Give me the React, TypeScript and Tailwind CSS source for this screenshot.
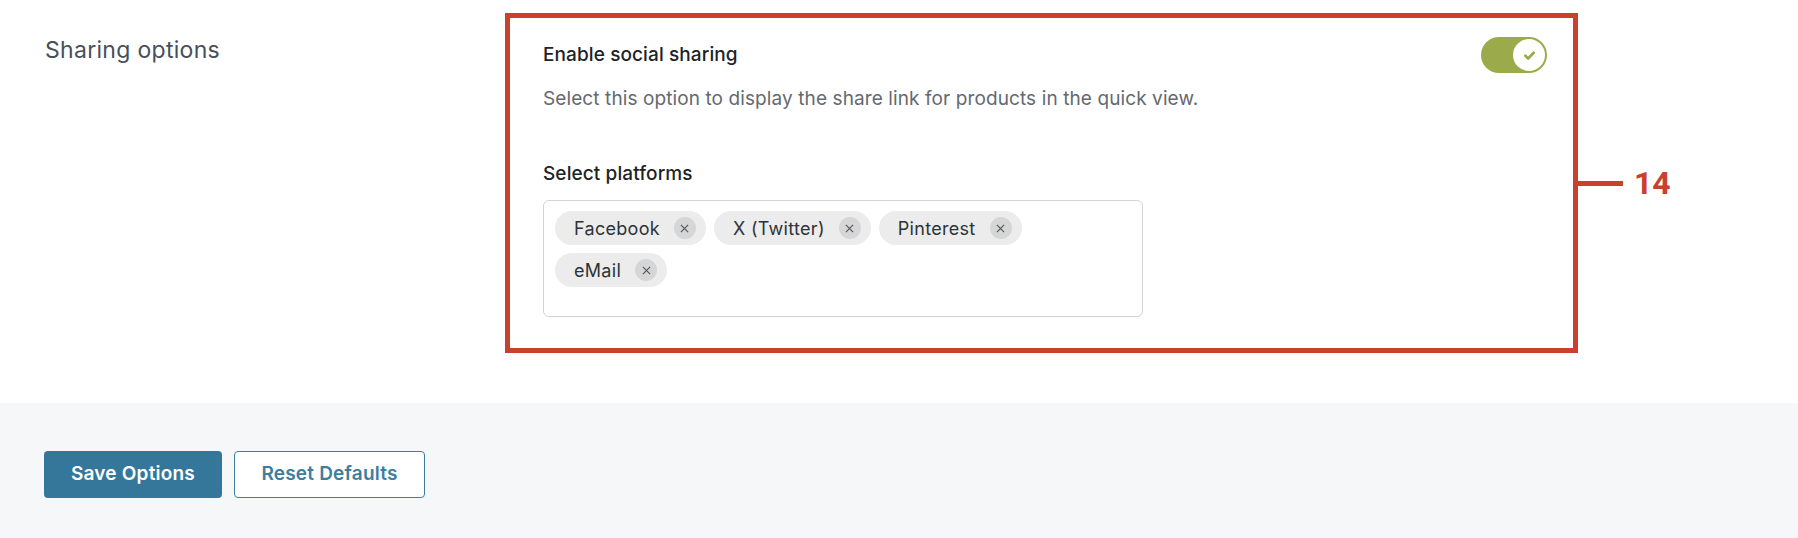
import { useState } from "react";

const PLATFORMS = ["Facebook", "X (Twitter)", "Pinterest", "eMail"];

const Chip = ({ label, onRemove }: { label: string; onRemove: () => void }) => (
  <span className="inline-flex h-[34px] items-center rounded-full bg-[#ececec] pl-[19px] pr-[10px] text-[18px] tracking-[0.3px] text-[#2c3338]">
    {label}
    <button
      onClick={onRemove}
      className="ml-[14px] flex h-[22px] w-[22px] items-center justify-center rounded-full bg-[#d6d6d6] text-[#50575e]"
    >
      <svg width="9" height="9" viewBox="0 0 10 10" fill="none" stroke="currentColor" strokeWidth="1.3">
        <path d="M1 1l8 8M9 1l-8 8" />
      </svg>
    </button>
  </span>
);

const Toggle = ({ on, onChange }: { on: boolean; onChange: (v: boolean) => void }) => (
  <button
    onClick={() => onChange(!on)}
    className={`flex h-[36px] w-[66px] items-center rounded-full p-[2px] ${
      on ? "justify-end bg-[#9bab4b]" : "justify-start bg-[#c3c4c7]"
    }`}
  >
    <span className="flex h-[32px] w-[32px] items-center justify-center rounded-full bg-white">
      {on && (
        <svg width="15" height="15" viewBox="0 0 12 12" fill="none" stroke="#9bab4b" strokeWidth="2.2" strokeLinecap="round" strokeLinejoin="round">
          <path d="M2.7 6.2l2.2 2.2 4.4-4.6" />
        </svg>
      )}
    </span>
  </button>
);

export default function App() {
  const [enabled, setEnabled] = useState(true);
  const [selected, setSelected] = useState(PLATFORMS);

  return (
    <div className="min-h-screen bg-white font-['Inter',sans-serif]">
      <div className="flex pt-[13px] pb-[50px] pl-[45px]">
        <div className="w-[460px] shrink-0 pt-[22px] text-[23px] leading-[30px] tracking-[0.3px] text-[#474f5c]">
          Sharing options
        </div>

        <div className="w-[1073px] shrink-0 border-[5px] border-[#c9412c] pt-[19px] pr-[26px] pb-[31px] pl-[33px]">
          <div className="flex h-[36px] items-center justify-between">
            <span className="text-[19px] font-medium tracking-[0.1px] text-[#1d2327]">Enable social sharing</span>
            <Toggle on={enabled} onChange={setEnabled} />
          </div>
          <p className="mt-[12px] text-[19px] leading-[28px] tracking-[0.1px] text-[#646970]">
            Select this option to display the share link for products in the quick view.
          </p>

          <div className="mt-[47px] text-[19px] font-medium leading-[28px] tracking-[0.1px] text-[#1d2327]">
            Select platforms
          </div>
          <div className="mt-[12px] flex h-[117px] w-[600px] flex-wrap content-start gap-x-[8px] gap-y-[8px] rounded-[6px] border border-[#d0d4d8] px-[11px] pt-[10px]">
            {selected.map((p) => (
              <Chip key={p} label={p} onRemove={() => setSelected(selected.filter((s) => s !== p))} />
            ))}
          </div>
        </div>

        <div className="flex items-center">
          <div className="h-[5px] w-[45px] bg-[#c9412c]" />
          <span className="ml-[11px] font-['Roboto',sans-serif] text-[32px] font-bold text-[#c9412c]">14</span>
        </div>
      </div>

      <div className="flex gap-[12px] bg-[#f6f7f9] pt-[48px] pb-[41px] pl-[44px]">
        <button className="h-[47px] w-[178px] rounded-[4px] bg-[#35779b] text-[19px] font-semibold tracking-[0.2px] text-white">
          Save Options
        </button>
        <button className="h-[47px] w-[191px] rounded-[4px] border border-[#3e7d9e] bg-white text-[19px] font-semibold tracking-[0.2px] text-[#3d7ea0]">
          Reset Defaults
        </button>
      </div>
    </div>
  );
}
